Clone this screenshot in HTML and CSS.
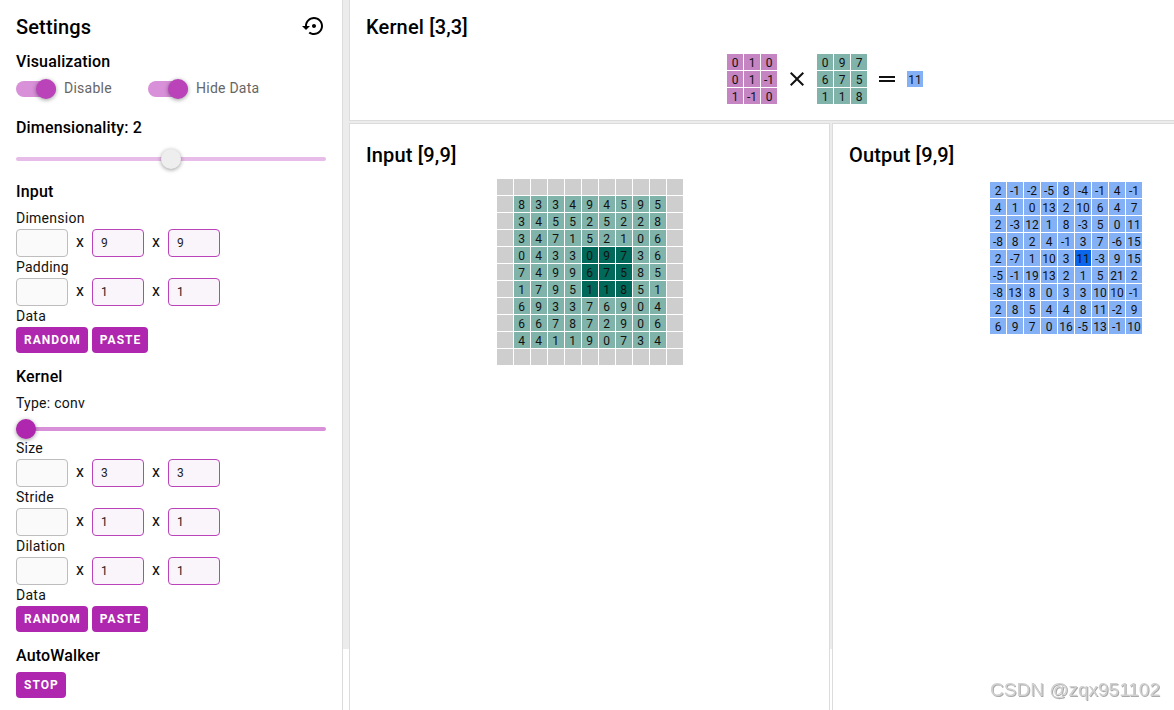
FILE: index.html
```html
<!DOCTYPE html>
<html lang="en">
<head>
<meta charset="utf-8">
<title>Convolution Visualizer</title>
<link rel="stylesheet" href="styles.css">
</head>
<body>
<div class="page">
  <aside class="settings">
    <header class="settings-head">
      <h1 class="title">Settings</h1>
      <button class="icon-button" type="button" aria-label="Reset settings">
        <svg class="icon" viewBox="0 0 24 24"><path d="M14 12c0-1.1-.9-2-2-2s-2 .9-2 2 .9 2 2 2 2-.9 2-2zm-2-9c-4.97 0-9 4.03-9 9H0l4 4 4-4H5c0-3.87 3.13-7 7-7s7 3.13 7 7-3.13 7-7 7c-1.51 0-2.91-.49-4.06-1.3l-1.42 1.44C8.04 20.3 9.94 21 12 21c4.97 0 9-4.03 9-9s-4.03-9-9-9z"/></svg>
      </button>
    </header>

    <h2 class="section">Visualization</h2>
    <div class="switches">
      <label class="switch"><input class="toggle" type="checkbox" checked>Disable</label>
      <label class="switch"><input class="toggle" type="checkbox" checked>Hide Data</label>
    </div>

    <h2 class="section"><label for="dimensionality">Dimensionality: 2</label></h2>
    <input class="slider slider-muted" id="dimensionality" type="range" min="1" max="3" value="2">

    <h2 class="section">Input</h2>
    <div class="label">Dimension</div>
    <div class="sizes">
      <input class="size" type="text" aria-label="Dimension depth" disabled><span class="times">x</span><input class="size" type="text" aria-label="Dimension rows" value="9"><span class="times">x</span><input class="size" type="text" aria-label="Dimension columns" value="9">
    </div>
    <div class="label">Padding</div>
    <div class="sizes">
      <input class="size" type="text" aria-label="Padding depth" disabled><span class="times">x</span><input class="size" type="text" aria-label="Padding rows" value="1"><span class="times">x</span><input class="size" type="text" aria-label="Padding columns" value="1">
    </div>
    <div class="label">Data</div>
    <div class="actions">
      <button class="button" type="button">RANDOM</button>
      <button class="button" type="button">PASTE</button>
    </div>

    <h2 class="section">Kernel</h2>
    <label class="label" for="kernel-type">Type: conv</label>
    <input class="slider slider-type" id="kernel-type" type="range" min="0" max="3" value="0">
    <div class="label">Size</div>
    <div class="sizes">
      <input class="size" type="text" aria-label="Size depth" disabled><span class="times">x</span><input class="size" type="text" aria-label="Size rows" value="3"><span class="times">x</span><input class="size" type="text" aria-label="Size columns" value="3">
    </div>
    <div class="label">Stride</div>
    <div class="sizes">
      <input class="size" type="text" aria-label="Stride depth" disabled><span class="times">x</span><input class="size" type="text" aria-label="Stride rows" value="1"><span class="times">x</span><input class="size" type="text" aria-label="Stride columns" value="1">
    </div>
    <div class="label">Dilation</div>
    <div class="sizes">
      <input class="size" type="text" aria-label="Dilation depth" disabled><span class="times">x</span><input class="size" type="text" aria-label="Dilation rows" value="1"><span class="times">x</span><input class="size" type="text" aria-label="Dilation columns" value="1">
    </div>
    <div class="label">Data</div>
    <div class="actions">
      <button class="button" type="button">RANDOM</button>
      <button class="button" type="button">PASTE</button>
    </div>

    <h2 class="section">AutoWalker</h2>
    <div class="actions"><button class="button" type="button">STOP</button></div>
  </aside>

  <main class="workspace">
    <section class="panel panel-kernel">
      <h2 class="title">Kernel [3,3]</h2>
      <div class="equation">
        <table class="matrix kernel" data-rows="0 1 0/0 1 -1/1 -1 0"></table>
        <svg class="icon" viewBox="0 0 24 24"><path d="M19 6.41L17.59 5 12 10.59 6.41 5 5 6.41 10.59 12 5 17.59 6.41 19 12 13.41 17.59 19 19 17.59 13.41 12z"/></svg>
        <table class="matrix input" data-rows="0 9 7/6 7 5/1 1 8"></table>
        <svg class="icon" viewBox="0 0 24 24"><path d="M20 9H4v2h16V9zM4 15h16v-2H4v2z"/></svg>
        <table class="matrix output" data-rows="11"></table>
      </div>
    </section>
    <div class="columns">
      <section class="panel panel-lower">
        <h2 class="title">Input [9,9]</h2>
        <table class="matrix input input-grid" data-active="4 5 3 3" data-rows="_ _ _ _ _ _ _ _ _ _ _/_ 8 3 3 4 9 4 5 9 5 _/_ 3 4 5 5 2 5 2 2 8 _/_ 3 4 7 1 5 2 1 0 6 _/_ 0 4 3 3 0 9 7 3 6 _/_ 7 4 9 9 6 7 5 8 5 _/_ 1 7 9 5 1 1 8 5 1 _/_ 6 9 3 3 7 6 9 0 4 _/_ 6 6 7 8 7 2 9 0 6 _/_ 4 4 1 1 9 0 7 3 4 _/_ _ _ _ _ _ _ _ _ _ _"></table>
      </section>
      <section class="panel panel-lower">
        <h2 class="title">Output [9,9]</h2>
        <table class="matrix output output-grid" data-active="4 5 1 1" data-rows="2 -1 -2 -5 8 -4 -1 4 -1/4 1 0 13 2 10 6 4 7/2 -3 12 1 8 -3 5 0 11/-8 8 2 4 -1 3 7 -6 15/2 -7 1 10 3 11 -3 9 15/-5 -1 19 13 2 1 5 21 2/-8 13 8 0 3 3 10 10 -1/2 8 5 4 4 8 11 -2 9/6 9 7 0 16 -5 13 -1 10"></table>
      </section>
    </div>
  </main>
</div>
<div class="watermark">CSDN @zqx951102</div>
<script src="matrix.js"></script>
</body>
</html>
```
FILE: styles.css
```css
* { box-sizing: border-box; }

body {
  margin: 0;
  font-family: Roboto, "Liberation Sans", sans-serif;
  font-size: 14px;
  line-height: 21px;
  letter-spacing: 0.25px;
  color: #111;
  background: #fff;
}

.page {
  display: grid;
  grid-template-columns: 343px 1fr;
  column-gap: 6px;
  min-height: 100vh;
  background: linear-gradient(#ececec, #ececec) no-repeat 0 0 / 100% calc(100vh - 61px);
}

.settings {
  padding: 16px 16px 12px;
  background: #fff;
  border-right: 1px solid #dcdcdc;
}

.settings-head {
  display: flex;
  justify-content: space-between;
  height: 22px;
}

.title {
  margin: 0;
  font-size: 20px;
  font-weight: 500;
  line-height: 22px;
  letter-spacing: 0.15px;
  color: #000;
}

.section {
  margin: 13px 0 5px;
  font-size: 16px;
  font-weight: 500;
  line-height: 22px;
  letter-spacing: 0.15px;
  color: #000;
}

.label { display: block; }

.icon {
  display: block;
  width: 24px;
  height: 24px;
  fill: currentColor;
}

.icon-button {
  display: flex;
  align-self: flex-end;
  padding: 0;
  border: 0;
  background: none;
  color: #000;
}

.switches {
  display: grid;
  grid-template-columns: 132px 1fr;
  padding-bottom: 5px;
}

.switch {
  display: flex;
  align-items: center;
  gap: 8px;
  color: #666;
}

.toggle {
  appearance: none;
  display: flex;
  align-items: center;
  justify-content: flex-end;
  width: 40px;
  height: 16px;
  margin: 0;
  border-radius: 8px;
  background: #d890d8;
}

.toggle::before {
  content: "";
  width: 20px;
  height: 20px;
  border-radius: 50%;
  background: #ba43ba;
  box-shadow: 0 1px 4px rgba(0, 0, 0, 0.4);
}

.slider {
  appearance: none;
  display: block;
  width: 100%;
  height: 20px;
  margin: 10px 0 -1px;
  background: none;
}

.slider-type { margin-top: 5px; }

.slider::-webkit-slider-runnable-track {
  height: 4px;
  border-radius: 2px;
  background: #d890d8;
}

.slider::-webkit-slider-thumb {
  appearance: none;
  width: 20px;
  height: 20px;
  margin-top: -8px;
  border-radius: 50%;
  background: #ae27ae;
  box-shadow: 0 1px 4px rgba(0, 0, 0, 0.4);
}

.slider-muted::-webkit-slider-runnable-track { background: #e8bce8; }
.slider-muted::-webkit-slider-thumb { background: #eee; }

.sizes { display: flex; }

.size {
  width: 52px;
  height: 28px;
  padding: 0 8px;
  border: 1px solid #ba43ba;
  border-radius: 4px;
  background: #faf4fb;
  font-family: inherit;
  font-size: 12px;
  color: #222;
}

.size:disabled {
  border-color: #bdbdbd;
  background: #fafafa;
}

.times {
  width: 24px;
  font-size: 16px;
  line-height: 26px;
  text-align: center;
}

.actions {
  display: flex;
  gap: 4px;
}

.button {
  height: 26px;
  padding: 0 7px 0 8px;
  border: 0;
  border-radius: 4px;
  background: #ae27ae;
  color: #fff;
  font-family: inherit;
  font-size: 12px;
  font-weight: 700;
  letter-spacing: 1px;
}

.workspace {
  display: flex;
  flex-direction: column;
  gap: 2px;
}

.panel {
  padding: 16px;
  background: #fff;
  border: 1px solid #dcdcdc;
}

.panel-kernel { border-width: 0 0 1px 1px; }

.columns {
  display: grid;
  grid-template-columns: 481fr 342fr;
  gap: 2px;
  flex: 1;
}

.panel-lower {
  padding-top: 20px;
  border-bottom: 0;
}

.panel-lower:last-child { border-right: 0; }

.equation {
  display: flex;
  justify-content: center;
  align-items: center;
  gap: 8px;
  margin-top: 16px;
  padding-left: 126px;
}

.matrix {
  border-collapse: separate;
  border-spacing: 1px;
  margin: -1px;
}

.matrix td {
  width: 16px;
  min-width: 16px;
  height: 16px;
  padding: 2px 0 0;
  font-size: 12px;
  line-height: 14px;
  letter-spacing: 0;
  text-align: center;
  white-space: nowrap;
}

.kernel td { background: #c485c2; }
.input td { background: #80b3aa; }
.output td { background: #84b1f5; }
.matrix .pad { background: #cecece; }
.input .active { background: #00695a; }
.output .active { background: #0a66eb; }

.input-grid { margin: 12px auto; }
.output-grid { margin: 15px 15px 15px auto; }

.watermark {
  position: fixed;
  right: 14px;
  bottom: 8px;
  font-family: "Liberation Sans", sans-serif;
  font-size: 19px;
  line-height: 24px;
  letter-spacing: normal;
  color: #d0d0d0;
  text-shadow: 1px 1px 0 #aaa;
}
```
FILE: matrix.js
```js
// Fills each matrix table from its data-rows value; "_" marks a padding cell.
document.querySelectorAll(".matrix").forEach(function (table) {
  var area = (table.dataset.active || "0 0 0 0").split(" ").map(Number);
  table.dataset.rows.split("/").forEach(function (row, r) {
    var tr = table.insertRow();
    row.split(" ").forEach(function (value, c) {
      var td = tr.insertCell();
      if (value === "_") {
        td.className = "pad";
        return;
      }
      td.textContent = value;
      if (r >= area[0] && r < area[0] + area[2] && c >= area[1] && c < area[1] + area[3]) {
        td.className = "active";
      }
    });
  });
});
```
